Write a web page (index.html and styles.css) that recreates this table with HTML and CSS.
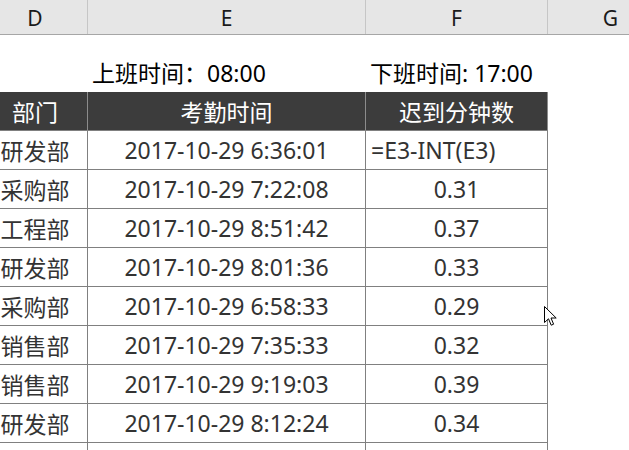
FILE: index.html
```html
<!DOCTYPE html>
<html lang="zh">
<head>
<meta charset="utf-8">
<link rel="stylesheet" href="styles.css">
</head>
<body>
<div class="sheet">
  <div class="colhead">
    <div class="ch d">D</div>
    <div class="ch e">E</div>
    <div class="ch f">F</div>
    <div class="ch g">G</div>
  </div>
  <div class="timerow">
    <div class="tc d"></div>
    <div class="tc e"><span class="on">上班时间：08:00</span></div>
    <div class="tc f"><span class="off">下班时间: 17:00</span></div>
  </div>
  <div class="table">
    <div class="th">部门</div><div class="th">考勤时间</div><div class="th">迟到分钟数</div>
    <div class="td">研发部</div><div class="td">2017-10-29 6:36:01</div><div class="td formula">=E3-INT(E3)</div>
    <div class="td">采购部</div><div class="td">2017-10-29 7:22:08</div><div class="td">0.31</div>
    <div class="td">工程部</div><div class="td">2017-10-29 8:51:42</div><div class="td">0.37</div>
    <div class="td">研发部</div><div class="td">2017-10-29 8:01:36</div><div class="td">0.33</div>
    <div class="td">采购部</div><div class="td">2017-10-29 6:58:33</div><div class="td">0.29</div>
    <div class="td">销售部</div><div class="td">2017-10-29 7:35:33</div><div class="td">0.32</div>
    <div class="td">销售部</div><div class="td">2017-10-29 9:19:03</div><div class="td">0.39</div>
    <div class="td">研发部</div><div class="td">2017-10-29 8:12:24</div><div class="td">0.34</div>
    <div class="td"></div><div class="td"></div><div class="td"></div>
  </div>
</div>
<svg class="cursor" width="14" height="21" viewBox="0 0 14 21">
  <path d="M0.5 0.5 L0.5 16.5 L4.5 12.8 L7.2 19.2 L9.6 18.2 L7 12 L12.2 12 Z" fill="#fff" stroke="#000" stroke-width="1" stroke-linejoin="miter"/>
</svg>
</body>
</html>
```

FILE: styles.css
```css
html, body {
  margin: 0;
  padding: 0;
  background: #fff;
  overflow: hidden;
}
body {
  width: 629px;
  height: 450px;
  position: relative;
  font-family: "Noto Sans", "Noto Sans CJK SC", sans-serif;
}
.sheet {
  margin-left: -17px;
  width: 646px;
  height: 450px;
  overflow: hidden;
}
.colhead {
  display: grid;
  grid-template-columns: 105px 278px 182px 126px;
  height: 35px;
  background: #e6e6e6;
  border-bottom: 1px solid #a6a6a6;
  box-sizing: border-box;
}
.ch {
  box-sizing: border-box;
  border-right: 1px solid #c6c6c6;
  display: flex;
  align-items: center;
  justify-content: center;
  font-size: 21px;
  color: #1a1a1a;
  padding-top: 2px;
}
.timerow {
  display: grid;
  grid-template-columns: 105px 278px 182px;
  height: 57px;
}
.tc {
  display: flex;
  align-items: flex-end;
  font-size: 23px;
  line-height: 30px;
  color: #000;
  padding-bottom: 4px;
  box-sizing: border-box;
}
.tc .on { margin-left: 4px; }
.tc .off { margin-left: 4px; }
.table {
  display: grid;
  grid-template-columns: 105px 278px 182px;
  grid-auto-rows: 39px;
}
.th, .td {
  box-sizing: border-box;
  display: flex;
  align-items: center;
  justify-content: center;
  font-size: 23px;
  border-right: 1px solid #808080;
  border-bottom: 1px solid #808080;
}
.th {
  background: #3c3c3c;
  color: #fff;
  border-right-color: #8c8c8c;
  border-bottom-color: #808080;
}
.td {
  color: #333;
}
.td.formula {
  justify-content: flex-start;
  padding-left: 5px;
}
.cursor {
  position: absolute;
  left: 544px;
  top: 306px;
}
```
